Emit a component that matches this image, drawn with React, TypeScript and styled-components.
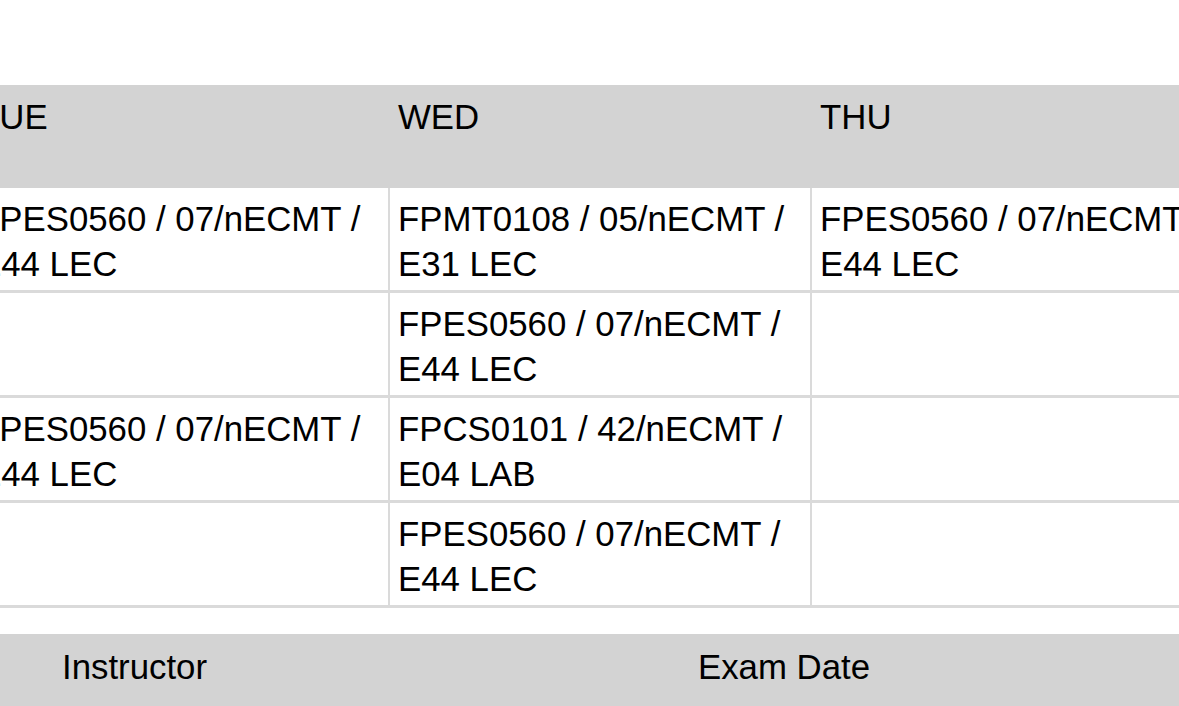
import React from "react";
import styled, { createGlobalStyle } from "styled-components";

const Global = createGlobalStyle`
  html, body {
    margin: 0;
    padding: 0;
    background: #ffffff;
    overflow: hidden;
  }
  body {
    font-family: "Liberation Sans", Arial, Helvetica, sans-serif;
    color: #000000;
  }
`;

const Page = styled.div`
  width: 1179px;
  height: 706px;
  overflow: hidden;
  box-sizing: border-box;
  padding-top: 85px;
`;

const Scroller = styled.div`
  margin-left: -30px;
  width: 1320px;
`;

const columns = "418px 420px 420px";

const HeadRow = styled.div`
  display: grid;
  grid-template-columns: ${columns};
  column-gap: 2px;
  background: #d3d3d3;
  height: 103px;
`;

const HeadCell = styled.div`
  padding: 9px 8px;
  font-size: 34.8px;
  line-height: 45px;
`;

const Body = styled.div`
  display: grid;
  grid-template-columns: ${columns};
  gap: 3px 2px;
  padding-bottom: 3px;
  background: #dadada;
`;

const Cell = styled.div`
  background: #ffffff;
  padding: 8px 8px 4px;
  min-height: 90px;
  font-size: 34.8px;
  line-height: 45px;
`;

const InfoHead = styled.div`
  margin-top: 26px;
  display: grid;
  grid-template-columns: 636px 1fr;
  background: #d3d3d3;
  height: 100px;
`;

const InfoHeadCell = styled.div`
  padding: 10px 0 0 92px;
  font-size: 34.8px;
  line-height: 45px;
`;

const days = ["TUE", "WED", "THU"];

const A = "FPES0560 / 07/nECMT / E44 LEC";
const rows: string[][] = [
  [A, "FPMT0108 / 05/nECMT / E31 LEC", A],
  ["", A, ""],
  [A, "FPCS0101 / 42/nECMT / E04 LAB", ""],
  ["", A, ""],
];

export default function App() {
  return (
    <Page>
      <Global />
      <Scroller>
        <HeadRow>
          {days.map((d) => (
            <HeadCell key={d}>{d}</HeadCell>
          ))}
        </HeadRow>
        <Body>
          {rows.map((r, i) =>
            r.map((c, j) => <Cell key={`${i}-${j}`}>{c}</Cell>)
          )}
        </Body>
        <InfoHead>
          <InfoHeadCell>Instructor</InfoHeadCell>
          <InfoHeadCell>Exam Date</InfoHeadCell>
        </InfoHead>
      </Scroller>
    </Page>
  );
}
